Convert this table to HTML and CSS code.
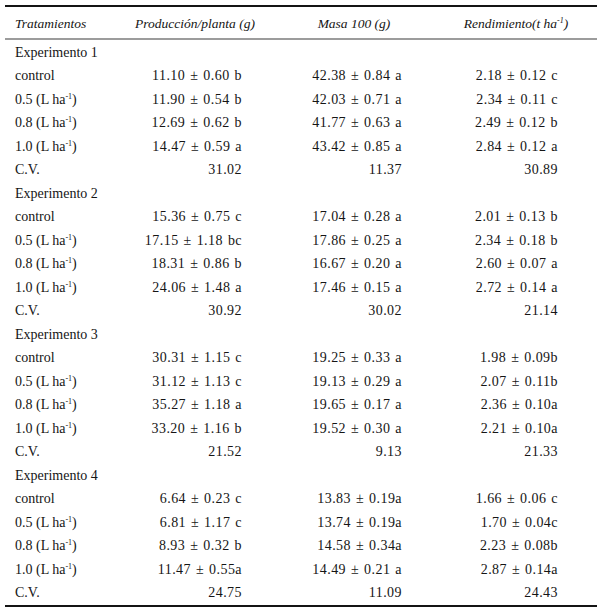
FILE: index.html
```html
<!DOCTYPE html>
<html lang="es">
<head>
<meta charset="utf-8">
<title>Tabla</title>
<link rel="stylesheet" href="styles.css">
</head>
<body>
<div class="table">
  <div class="row head">
    <div class="c1">Tratamientos</div>
    <div class="c2">Producción/planta (g)</div>
    <div class="c3">Masa 100 (g)</div>
    <div class="c4">Rendimiento(t ha<sup>-1</sup>)</div>
  </div>
  <div class="body">
    <div class="row"><div class="c1">Experimento 1</div><div class="c2"></div><div class="c3"></div><div class="c4"></div></div>
    <div class="row"><div class="c1">control</div><div class="c2 n">11.10 ± 0.60 b</div><div class="c3 n">42.38 ± 0.84 a</div><div class="c4 n">2.18 ± 0.12 c</div></div>
    <div class="row"><div class="c1">0.5 (L ha<sup>-1</sup>)</div><div class="c2 n">11.90 ± 0.54 b</div><div class="c3 n">42.03 ± 0.71 a</div><div class="c4 n">2.34 ± 0.11 c</div></div>
    <div class="row"><div class="c1">0.8 (L ha<sup>-1</sup>)</div><div class="c2 n">12.69 ± 0.62 b</div><div class="c3 n">41.77 ± 0.63 a</div><div class="c4 n">2.49 ± 0.12 b</div></div>
    <div class="row"><div class="c1">1.0 (L ha<sup>-1</sup>)</div><div class="c2 n">14.47 ± 0.59 a</div><div class="c3 n">43.42 ± 0.85 a</div><div class="c4 n">2.84 ± 0.12 a</div></div>
    <div class="row"><div class="c1">C.V.</div><div class="c2 n">31.02</div><div class="c3 n">11.37</div><div class="c4 n">30.89</div></div>

    <div class="row"><div class="c1">Experimento 2</div><div class="c2"></div><div class="c3"></div><div class="c4"></div></div>
    <div class="row"><div class="c1">control</div><div class="c2 n">15.36 ± 0.75 c</div><div class="c3 n">17.04 ± 0.28 a</div><div class="c4 n">2.01 ± 0.13 b</div></div>
    <div class="row"><div class="c1">0.5 (L ha<sup>-1</sup>)</div><div class="c2 n">17.15 ± 1.18 bc</div><div class="c3 n">17.86 ± 0.25 a</div><div class="c4 n">2.34 ± 0.18 b</div></div>
    <div class="row"><div class="c1">0.8 (L ha<sup>-1</sup>)</div><div class="c2 n">18.31 ± 0.86 b</div><div class="c3 n">16.67 ± 0.20 a</div><div class="c4 n">2.60 ± 0.07 a</div></div>
    <div class="row"><div class="c1">1.0 (L ha<sup>-1</sup>)</div><div class="c2 n">24.06 ± 1.48 a</div><div class="c3 n">17.46 ± 0.15 a</div><div class="c4 n">2.72 ± 0.14 a</div></div>
    <div class="row"><div class="c1">C.V.</div><div class="c2 n">30.92</div><div class="c3 n">30.02</div><div class="c4 n">21.14</div></div>

    <div class="row"><div class="c1">Experimento 3</div><div class="c2"></div><div class="c3"></div><div class="c4"></div></div>
    <div class="row"><div class="c1">control</div><div class="c2 n">30.31 ± 1.15 c</div><div class="c3 n">19.25 ± 0.33 a</div><div class="c4 n">1.98 ± 0.09b</div></div>
    <div class="row"><div class="c1">0.5 (L ha<sup>-1</sup>)</div><div class="c2 n">31.12 ± 1.13 c</div><div class="c3 n">19.13 ± 0.29 a</div><div class="c4 n">2.07 ± 0.11b</div></div>
    <div class="row"><div class="c1">0.8 (L ha<sup>-1</sup>)</div><div class="c2 n">35.27 ± 1.18 a</div><div class="c3 n">19.65 ± 0.17 a</div><div class="c4 n">2.36 ± 0.10a</div></div>
    <div class="row"><div class="c1">1.0 (L ha<sup>-1</sup>)</div><div class="c2 n">33.20 ± 1.16 b</div><div class="c3 n">19.52 ± 0.30 a</div><div class="c4 n">2.21 ± 0.10a</div></div>
    <div class="row"><div class="c1">C.V.</div><div class="c2 n">21.52</div><div class="c3 n">9.13</div><div class="c4 n">21.33</div></div>

    <div class="row"><div class="c1">Experimento 4</div><div class="c2"></div><div class="c3"></div><div class="c4"></div></div>
    <div class="row"><div class="c1">control</div><div class="c2 n">6.64 ± 0.23 c</div><div class="c3 n">13.83 ± 0.19a</div><div class="c4 n">1.66 ± 0.06 c</div></div>
    <div class="row"><div class="c1">0.5 (L ha<sup>-1</sup>)</div><div class="c2 n">6.81 ± 1.17 c</div><div class="c3 n">13.74 ± 0.19a</div><div class="c4 n">1.70 ± 0.04c</div></div>
    <div class="row"><div class="c1">0.8 (L ha<sup>-1</sup>)</div><div class="c2 n">8.93 ± 0.32 b</div><div class="c3 n">14.58 ± 0.34a</div><div class="c4 n">2.23 ± 0.08b</div></div>
    <div class="row"><div class="c1">1.0 (L ha<sup>-1</sup>)</div><div class="c2 n">11.47 ± 0.55a</div><div class="c3 n">14.49 ± 0.21 a</div><div class="c4 n">2.87 ± 0.14a</div></div>
    <div class="row"><div class="c1">C.V.</div><div class="c2 n">24.75</div><div class="c3 n">11.09</div><div class="c4 n">24.43</div></div>
  </div>
</div>
</body>
</html>
```

FILE: styles.css
```css
html, body {
  margin: 0;
  padding: 0;
  background: #ffffff;
}
body {
  padding: 5px 8px 0 5px;
  font-family: "Liberation Serif", "Times New Roman", serif;
  font-size: 14px;
  color: #151515;
}
.table {
  width: 592px;
  border-top: 2px solid #141414;
  border-bottom: 2px solid #141414;
}
.row {
  display: grid;
  grid-template-columns: 125px 130px 188px 149px;
  height: 23.5px;
  align-items: center;
  line-height: 16px;
  white-space: nowrap;
}
.head {
  box-sizing: border-box;
  height: 33px;
  padding-top: 2px;
  font-style: italic;
  font-size: 13.5px;
  border-bottom: 2px solid #9c9c9c;
}
.body {
  padding-top: 1px;
}
.c1 {
  padding-left: 10px;
}
.head .c2, .head .c3 {
  text-align: center;
}
.head .c4 {
  text-align: center;
  padding-right: 13px;
}
.n {
  text-align: right;
  letter-spacing: 0.45px;
  word-spacing: 1px;
}
.c2.n { padding-right: 18px; }
.c3.n { padding-right: 46px; }
.c4.n { padding-right: 39px; }
sup {
  font-size: 8px;
  line-height: 0;
  vertical-align: 5px;
}
```
